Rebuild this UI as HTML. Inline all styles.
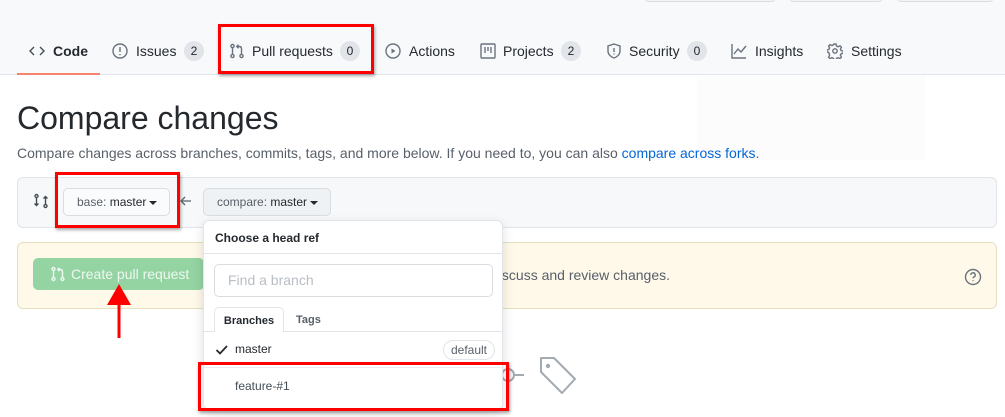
<!DOCTYPE html>
<html><head><style>
*{box-sizing:border-box;margin:0;padding:0}
body{width:1005px;height:417px;overflow:hidden;background:#fff;font-family:"Liberation Sans",sans-serif;color:#24292e;position:relative}
.a{position:absolute}
.tab{position:absolute;top:43px;font-size:14px;color:#24292e;white-space:nowrap}
.cnt{position:absolute;top:41px;height:20px;min-width:20px;border-radius:10px;background:#e1e4e8;font-size:12px;text-align:center;line-height:20px;color:#24292e;padding:0 6px}
svg.i{position:absolute;fill:none;stroke:#6a737d;stroke-width:1.4}
.red{position:absolute;border:3px solid #f00;box-shadow:1px 2px 3px rgba(0,0,0,.35)}
.car{display:inline-block;width:0;height:0;border-left:4px solid transparent;border-right:4px solid transparent;border-top:4px solid #24292e;vertical-align:middle;margin-left:3px}
</style></head><body>
<div class="a" style="left:0;top:0;width:1005px;height:75px;background:#f8f9fb;border-bottom:1px solid #e1e4e8"></div>
<div class="a" style="left:645px;top:-4px;width:130px;height:6px;border:1px solid #ddd;border-radius:4px;background:#f3f4f6"></div>
<div class="a" style="left:790px;top:-4px;width:92px;height:6px;border:1px solid #ddd;border-radius:4px;background:#f3f4f6"></div>
<div class="a" style="left:898px;top:-4px;width:95px;height:6px;border:1px solid #ddd;border-radius:4px;background:#f3f4f6"></div>
<div class="a" style="left:697px;top:76px;width:229px;height:84px;background:#fcfcfd"></div>

<svg class="i" style="left:29px;top:44px" width="16" height="14"><path d="M5 3L1 7l4 4M11 3l4 4-4 4" stroke="#444d56"/></svg>
<div class="tab" style="left:53px;font-weight:bold">Code</div>
<div class="a" style="left:17px;top:73px;width:83px;height:2px;background:#f9826c"></div>
<svg class="i" style="left:112px;top:43px" width="16" height="16"><circle cx="8" cy="8" r="7"/><path d="M8 4v5M8 11v1.2"/></svg>
<div class="tab" style="left:136px">Issues</div><div class="cnt" style="left:184px">2</div>
<svg class="i" style="left:229px;top:43px" width="16" height="16"><circle cx="3.5" cy="3" r="1.6"/><circle cx="3.5" cy="13" r="1.6"/><circle cx="12.5" cy="13" r="1.6"/><path d="M3.5 4.6v6.8M12.5 11.4V5.5Q12.5 3.5 10 3.5H8M9.5 1.8L7.8 3.5l1.7 1.7"/></svg>
<div class="tab" style="left:252px">Pull requests</div><div class="cnt" style="left:340px">0</div>
<div class="red" style="left:218px;top:24px;width:156px;height:50px"></div>
<svg class="i" style="left:385px;top:43px" width="16" height="16"><circle cx="8" cy="8" r="7"/><path d="M6.5 5.5v5l4-2.5z" fill="#6a737d" stroke="none"/></svg>
<div class="tab" style="left:409px">Actions</div>
<svg class="i" style="left:480px;top:43px" width="16" height="16"><rect x="1" y="1" width="14" height="14" rx="1"/><path d="M5 4v6M8 4v4M11 4v6"/></svg>
<div class="tab" style="left:503px">Projects</div><div class="cnt" style="left:561px">2</div>
<svg class="i" style="left:606px;top:43px" width="16" height="16"><path d="M8 1l6 2v5c0 3.5-3 6-6 7-3-1-6-3.5-6-7V3z"/><path d="M8 5v4M8 10.5v1"/></svg>
<div class="tab" style="left:629px">Security</div><div class="cnt" style="left:687px">0</div>
<svg class="i" style="left:731px;top:43px" width="16" height="16"><path d="M1 1v14h14M3 11l4-5 3 3 5-6"/></svg>
<div class="tab" style="left:755px">Insights</div>
<svg class="i" style="left:827px;top:43px" width="16" height="16"><circle cx="8" cy="8" r="2.2"/><path d="M7 1h2l.5 2 1.6.8 1.9-1 1.4 1.4-1 1.9.8 1.6 2 .5v2l-2 .5-.8 1.6 1 1.9-1.4 1.4-1.9-1-1.6.8-.5 2H7l-.5-2-1.6-.8-1.9 1-1.4-1.4 1-1.9L1.8 9.5 0 9V7l1.8-.5.8-1.6-1-1.9L3 1.6l1.9 1 1.6-.8z"/></svg>
<div class="tab" style="left:851px">Settings</div>

<div class="a" style="left:17px;top:100px;font-size:32px;color:#24292e">Compare changes</div>
<div class="a" style="left:17px;top:145px;font-size:14px;color:#586069">Compare changes across branches, commits, tags, and more below. If you need to, you can also <span style="color:#0366d6">compare across forks</span>.</div>

<div class="a" style="left:17px;top:177px;width:980px;height:51px;background:#f6f8fa;border:1px solid #e1e4e8;border-radius:6px"></div>
<svg class="i" style="left:33px;top:193px;stroke:#444d56" width="16" height="16"><circle cx="3.5" cy="3" r="1.5"/><circle cx="12.5" cy="13" r="1.5"/><path d="M3.5 4.5v8M1.5 10.5l2 2 2-2M12.5 11.5v-8M10.5 5.5l2-2 2 2"/></svg>
<div class="a" style="left:63px;top:188px;width:107px;height:28px;background:#fafbfc;border:1px solid #d8dde2;border-radius:5px;font-size:12px;line-height:26px;padding-left:13px;color:#586069">base: <span style="color:#24292e">master</span><span class="car"></span></div>
<div class="red" style="left:55px;top:172px;width:125px;height:56px"></div>
<svg class="i" style="left:180px;top:195px" width="12" height="12"><path d="M11 6H1M5 2L1 6l4 4" stroke="#586069" stroke-width="1.3"/></svg>
<div class="a" style="left:203px;top:188px;width:128px;height:28px;background:#eff2f5;border:1px solid #d8dde2;border-radius:5px;font-size:12px;line-height:26px;padding-left:13px;color:#586069">compare: <span style="color:#24292e">master</span><span class="car"></span></div>

<div class="a" style="left:17px;top:242px;width:980px;height:67px;background:#fff9ea;border:1px solid #e6dfc0;border-radius:6px"></div>
<div class="a" style="left:33px;top:258px;width:171px;height:32px;background:#94d3a2;border-radius:5px;color:#eef8f0;font-size:14px;line-height:32px;padding-left:38px">Create pull request</div>
<svg class="i" style="left:50px;top:266px;stroke:#eef8f0" width="16" height="16"><circle cx="3.5" cy="3" r="1.5"/><circle cx="3.5" cy="13" r="1.5"/><circle cx="12.5" cy="13" r="1.5"/><path d="M3.5 4.5v7M12.5 11.5V5.5Q12.5 3.5 10 3.5H8M9.5 1.8L7.8 3.5l1.7 1.7"/></svg>
<div class="a" style="left:0;top:267px;width:670px;text-align:right;font-size:14px;color:#586069;white-space:nowrap">Open a pull request to discuss and review changes.</div>
<svg class="i" style="left:964px;top:268px;stroke:#6a737d" width="18" height="18"><circle cx="9" cy="9" r="7.5"/><path d="M6.8 7a2.2 2.2 0 1 1 3 2c-.6.3-.8.7-.8 1.3M9 12.3v.8"/></svg>

<svg class="a" style="left:100px;top:280px" width="40" height="60"><path d="M19 4L7 25h24z" fill="#f00"/><rect x="17.5" y="24" width="3" height="34" fill="#f00"/></svg>

<svg class="i" style="left:500px;top:360px;stroke:#a3aab1;stroke-width:2" width="30" height="30"><circle cx="8" cy="15" r="6"/><path d="M14 15h10"/></svg>
<svg class="i" style="left:538px;top:355px;stroke:#a3aab1;stroke-width:2" width="42" height="42"><path d="M3 3h13l21 21-13 14L3 17z" stroke-linejoin="round"/><circle cx="10" cy="11" r="1.2" fill="#a3aab1"/></svg>

<div class="a" style="left:203px;top:220px;width:300px;height:190px;background:#fff;border:1px solid #e1e4e8;border-radius:6px;box-shadow:0 4px 12px rgba(0,0,0,.12)">
<div class="a" style="left:11px;top:10px;font-size:12px;font-weight:bold">Choose a head ref</div>
<div class="a" style="left:0;top:32px;width:298px;height:1px;background:#e1e4e8"></div>
<div class="a" style="left:10px;top:43px;width:279px;height:33px;border:1px solid #d8dde2;border-radius:5px;font-size:14px;color:#b8bec4;line-height:31px;padding-left:13px">Find a branch</div>
<div class="a" style="left:0;top:110px;width:298px;height:1px;background:#e1e4e8"></div>
<div class="a" style="left:10px;top:86px;width:70px;height:25px;background:#fff;border:1px solid #e1e4e8;border-bottom:none;border-radius:5px 5px 0 0;font-size:11px;font-weight:bold;line-height:26px;text-align:center">Branches</div>
<div class="a" style="left:92px;top:93px;font-size:11px;font-weight:bold;color:#586069">Tags</div>
<svg class="a" style="left:11px;top:123px" width="14" height="12"><path d="M1.5 6l3.5 3.5L12 2" fill="none" stroke="#24292e" stroke-width="1.8"/></svg>
<div class="a" style="left:31px;top:121px;font-size:12px">master</div>
<div class="a" style="left:239px;top:119px;width:52px;height:20px;border:1px solid #e1e4e8;border-radius:10px;font-size:12px;color:#586069;line-height:18px;text-align:center">default</div>
<div class="a" style="left:0;top:146px;width:298px;height:1px;background:#eaecef"></div>
<div class="a" style="left:31px;top:158px;font-size:12px;color:#444d56">feature-#1</div>
</div>
<div class="red" style="left:198px;top:362px;width:311px;height:49px"></div>
</body></html>
